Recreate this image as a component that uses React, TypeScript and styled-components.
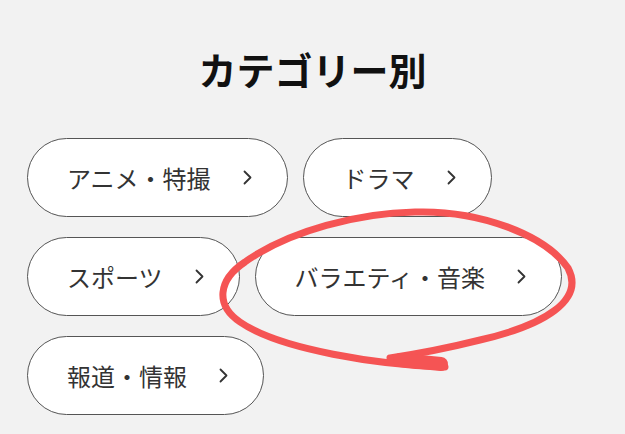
import styled, { createGlobalStyle } from 'styled-components'

const categories = ['アニメ・特撮', 'ドラマ', 'スポーツ', 'バラエティ・音楽', '報道・情報']

const GlobalStyle = createGlobalStyle`
  html, body {
    margin: 0;
    padding: 0;
    background: #f2f2f2;
  }
  * {
    box-sizing: border-box;
  }
`

const App = () => {
  return (
    <Page>
      <GlobalStyle />
      <Title>カテゴリー別</Title>
      <PillList>
        {categories.map((name) => (
          <Pill key={name} href="#">
            <PillLabel>{name}</PillLabel>
            <Chevron />
          </Pill>
        ))}
      </PillList>
      <Marker />
    </Page>
  )
}

export default App

const Chevron = () => (
  <ChevronSvg viewBox="0 0 9 15" width="9" height="15">
    <polyline points="1.5,1.5 7.5,7.5 1.5,13.5" />
  </ChevronSvg>
)

// hand drawn red circle around the variety pill
const Marker = () => (
  <MarkerSvg viewBox="0 0 625 434" width="625" height="434">
    <path
      d="M 445 367
         C 380 365, 280 350, 240 322
         C 215 305, 218 280, 245 262
         C 290 230, 360 213, 415 212
         C 480 210, 545 235, 568 268
         C 585 300, 545 325, 480 340
         C 440 350, 410 355, 390 358"
      fill="none"
      stroke="#f55454"
      strokeWidth="7"
      strokeLinecap="round"
    />
    <path
      d="M 400 360 L 441 364"
      stroke="#f55454"
      strokeWidth="14"
      strokeLinecap="round"
    />
  </MarkerSvg>
)

const Page = styled.div`
  position: relative;
  width: 625px;
  height: 434px;
  padding: 50px 27px 0 27px;
  font-family: "Noto Sans CJK JP", "Noto Sans", sans-serif;
  overflow: hidden;
`

const Title = styled.h2`
  margin: 0 0 50px;
  font-size: 38px;
  line-height: 38px;
  font-weight: 700;
  color: #111;
  text-align: center;
`

const PillList = styled.div`
  display: flex;
  flex-wrap: wrap;
  gap: 20px 15px;
`

const Pill = styled.a`
  display: flex;
  align-items: center;
  gap: 32px;
  height: 79px;
  padding: 0 35px 0 39px;
  background: #fff;
  border: 1px solid #555;
  border-radius: 40px;
  color: #333;
  text-decoration: none;
`

const PillLabel = styled.span`
  font-size: 24px;
  line-height: 1;
  letter-spacing: 0;
`

const ChevronSvg = styled.svg`
  flex: none;
  fill: none;
  stroke: #333;
  stroke-width: 1.8;
  stroke-linecap: round;
  stroke-linejoin: round;
`

const MarkerSvg = styled.svg`
  position: absolute;
  left: 0;
  top: 0;
  pointer-events: none;
`
